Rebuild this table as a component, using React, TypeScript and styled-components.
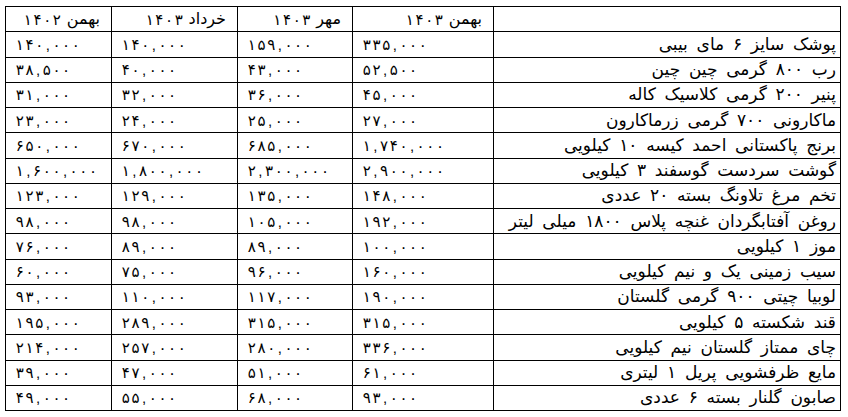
import React from "react";
import styled, { createGlobalStyle } from "styled-components";

const GlobalStyle = createGlobalStyle`
  html, body {
    margin: 0;
    padding: 0;
    background: #fff;
  }
  body {
    padding: 6px 0 0 5px;
    font-family: "Liberation Sans", "DejaVu Sans", sans-serif;
    color: #000;
  }
`;

const PriceTable = styled.table`
  border-collapse: collapse;
  table-layout: fixed;
  width: 836px;
  direction: ltr;
`;

const Row = styled.tr`
  height: 25.25px;
`;

const Cell = styled.td<{ $w?: number; $name?: boolean }>`
  box-sizing: border-box;
  border: 1px solid #000;
  padding: ${(p) => (p.$name ? "0 4px 0 0" : "0 0 0 9px")};
  width: ${(p) => (p.$w ? `${p.$w}px` : "auto")};
  font-size: ${(p) => (p.$name ? "17px" : "15px")};
  word-spacing: ${(p) => (p.$name ? "4px" : "0")};
  direction: rtl;
  text-align: ${(p) => (p.$name ? "right" : "left")};
  white-space: nowrap;
  overflow: hidden;
  vertical-align: middle;
  line-height: 1;
`;

const NumText = styled.span`
  direction: ltr;
  unicode-bidi: isolate;
  display: inline-flex;
  font-size: 15px;
`;

// each digit gets its own slot, the reference spaces them wide
const Glyph = styled.span<{ $sep?: boolean }>`
  display: inline-block;
  width: ${(p) => (p.$sep ? "7.5px" : "9.7px")};
  text-align: center;
`;

const HeadCell = styled.td<{ $w?: number }>`
  box-sizing: border-box;
  border: 1px solid #000;
  padding: 0 11px 0 0;
  width: ${(p) => (p.$w ? `${p.$w}px` : "auto")};
  font-size: 16px;
  direction: rtl;
  text-align: right;
  white-space: nowrap;
  vertical-align: middle;
  line-height: 1;
`;

const HeadYear = styled(NumText)`
  margin-right: 5px;
  vertical-align: middle;
`;

const Digits = ({ value }: { value: string }) => (
  <>
    {value.split("").map((c, i) => (
      <Glyph key={i} $sep={c === ","}>
        {c}
      </Glyph>
    ))}
  </>
);

const widths = [106, 126, 115, 141];
const headers = [
  { month: "بهمن", year: "۱۴۰۲" },
  { month: "خرداد", year: "۱۴۰۳" },
  { month: "مهر", year: "۱۴۰۳" },
  { month: "بهمن", year: "۱۴۰۳" },
];

// values left to right: بهمن ۱۴۰۲, خرداد ۱۴۰۳, مهر ۱۴۰۳, بهمن ۱۴۰۳
const items: { name: string; prices: string[] }[] = [
  { name: "پوشک سایز ۶ مای بیبی", prices: ["۱۴۰,۰۰۰", "۱۴۰,۰۰۰", "۱۵۹,۰۰۰", "۳۳۵,۰۰۰"] },
  { name: "رب ۸۰۰ گرمی چین چین", prices: ["۳۸,۵۰۰", "۴۰,۰۰۰", "۴۳,۰۰۰", "۵۲,۵۰۰"] },
  { name: "پنیر ۲۰۰ گرمی کلاسیک کاله", prices: ["۳۱,۰۰۰", "۳۲,۰۰۰", "۳۶,۰۰۰", "۴۵,۰۰۰"] },
  { name: "ماکارونی ۷۰۰ گرمی زرماکارون", prices: ["۲۳,۰۰۰", "۲۴,۰۰۰", "۲۵,۰۰۰", "۲۷,۰۰۰"] },
  { name: "برنج پاکستانی احمد کیسه ۱۰  کیلویی", prices: ["۶۵۰,۰۰۰", "۶۷۰,۰۰۰", "۶۸۵,۰۰۰", "۱,۷۴۰,۰۰۰"] },
  { name: "گوشت سردست گوسفند ۳ کیلویی", prices: ["۱,۶۰۰,۰۰۰", "۱,۸۰۰,۰۰۰", "۲,۳۰۰,۰۰۰", "۲,۹۰۰,۰۰۰"] },
  { name: "تخم مرغ تلاونگ بسته ۲۰ عددی", prices: ["۱۲۳,۰۰۰", "۱۲۹,۰۰۰", "۱۳۵,۰۰۰", "۱۴۸,۰۰۰"] },
  { name: "روغن آفتابگردان غنچه پلاس ۱۸۰۰ میلی لیتر", prices: ["۹۸,۰۰۰", "۹۸,۰۰۰", "۱۰۵,۰۰۰", "۱۹۲,۰۰۰"] },
  { name: "موز ۱ کیلویی", prices: ["۷۶,۰۰۰", "۸۹,۰۰۰", "۸۹,۰۰۰", "۱۰۰,۰۰۰"] },
  { name: "سیب زمینی یک و نیم کیلویی", prices: ["۶۰,۰۰۰", "۷۵,۰۰۰", "۹۶,۰۰۰", "۱۶۰,۰۰۰"] },
  { name: "لوبیا چیتی ۹۰۰ گرمی گلستان", prices: ["۹۳,۰۰۰", "۱۱۰,۰۰۰", "۱۱۷,۰۰۰", "۱۹۰,۰۰۰"] },
  { name: "قند شکسته ۵ کیلویی", prices: ["۱۹۵,۰۰۰", "۲۸۹,۰۰۰", "۳۱۵,۰۰۰", "۳۱۵,۰۰۰"] },
  { name: "چای ممتاز گلستان نیم کیلویی", prices: ["۲۱۴,۰۰۰", "۲۵۷,۰۰۰", "۲۸۰,۰۰۰", "۳۳۶,۰۰۰"] },
  { name: "مایع ظرفشویی پریل ۱ لیتری", prices: ["۳۹,۰۰۰", "۴۷,۰۰۰", "۵۱,۰۰۰", "۶۱,۰۰۰"] },
  { name: "صابون گلنار بسته ۶ عددی", prices: ["۴۹,۰۰۰", "۵۵,۰۰۰", "۶۸,۰۰۰", "۹۳,۰۰۰"] },
];

const App = () => {
  return (
    <>
      <GlobalStyle />
      <PriceTable>
        <tbody>
          <Row>
            {headers.map((h, i) => (
              <HeadCell key={i} $w={widths[i]}>
                {h.month}
                <HeadYear>
                  <Digits value={h.year} />
                </HeadYear>
              </HeadCell>
            ))}
            <HeadCell />
          </Row>
          {items.map((item) => (
            <Row key={item.name}>
              {item.prices.map((p, i) => (
                <Cell key={i} $w={widths[i]}>
                  <NumText>
                    <Digits value={p} />
                  </NumText>
                </Cell>
              ))}
              <Cell $name>{item.name}</Cell>
            </Row>
          ))}
        </tbody>
      </PriceTable>
    </>
  );
};

export default App;
